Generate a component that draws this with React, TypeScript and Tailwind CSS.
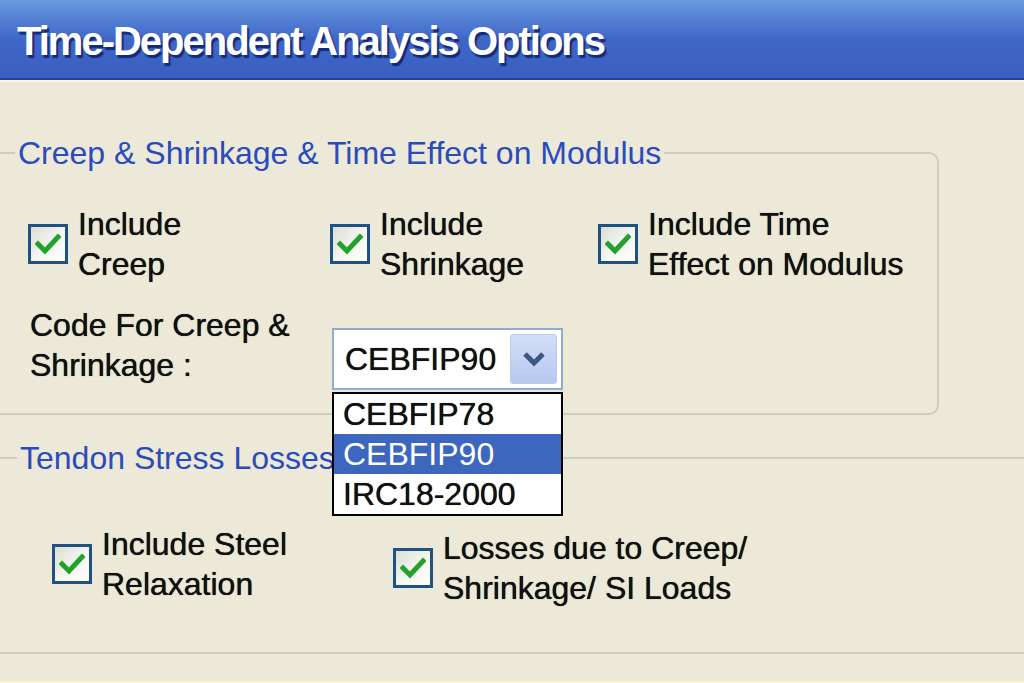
import React from "react";

function Check() {
  return (
    <div className="w-[40px] h-[40px] shrink-0 border-[3px] border-[#1d5283] bg-gradient-to-br from-[#dcdcd4] via-[#f4f4f0] to-white flex items-center justify-center">
      <svg width="26" height="22" viewBox="0 0 26 22">
        <path d="M3 11 L10 18 L23 4" fill="none" stroke="#21a22b" strokeWidth="5" strokeLinecap="square" />
      </svg>
    </div>
  );
}

function CheckItem({ lines }: { lines: string[] }) {
  return (
    <div className="flex items-center gap-[10px]">
      <Check />
      <div className="text-[32px] leading-[40px] text-[#111] [text-shadow:0_0_0.7px_#000]">
        {lines.map((l) => (
          <div key={l} className="whitespace-nowrap">{l}</div>
        ))}
      </div>
    </div>
  );
}

export default function App() {
  return (
    <div
      className="w-[1024px] h-[683px] overflow-hidden bg-[#ece9d8] flex flex-col"
      style={{ fontFamily: '"Liberation Sans", Arial, sans-serif' }}
    >
      {/* Title bar */}
      <div className="h-[78px] shrink-0 bg-gradient-to-b from-[#6a9ae0] via-[#3f66c6] to-[#3a5fc0] flex items-center pl-[17px] pt-[4px]">
        <span className="text-white font-bold text-[40px] tracking-[-2px] [text-shadow:2px_3px_1px_#142a78]">
          Time-Dependent Analysis Options
        </span>
      </div>
      <div className="h-[2px] shrink-0 bg-[#20409c]" />
      <div className="h-[2px] shrink-0 bg-[#fbf8e4]" />

      {/* Group 1 */}
      <fieldset className="mt-[53px] ml-[-20px] w-[959px] border-2 border-[#cfccbb] rounded-[10px] pb-[23px] px-0 min-w-0">
        <legend className="ml-[33px] px-[3px] text-[32px] leading-[36px] text-[#2b4bbd] whitespace-nowrap">
          Creep &amp; Shrinkage &amp; Time Effect on Modulus
        </legend>
        <div className="mt-[33px] flex">
          <div className="ml-[46px] w-[302px]">
            <CheckItem lines={["Include", "Creep"]} />
          </div>
          <div className="w-[268px]">
            <CheckItem lines={["Include", "Shrinkage"]} />
          </div>
          <div>
            <CheckItem lines={["Include Time", "Effect on Modulus"]} />
          </div>
        </div>
        <div className="mt-[21px] flex items-start">
          <div className="ml-[48px] w-[302px] text-[32px] leading-[40px] text-[#111] [text-shadow:0_0_0.7px_#000]">
            <div>Code For Creep &amp;</div>
            <div>Shrinkage :</div>
          </div>
          <div className="relative mt-[23px]">
            <div className="w-[231px] h-[62px] border-2 border-[#8fabd0] bg-white flex items-center justify-between pl-[11px] pr-[4px]">
              <span className="text-[32px] text-[#111] [text-shadow:0_0_0.7px_#000]">CEBFIP90</span>
              <div className="w-[47px] h-[50px] rounded-[3px] border border-[#b9cbef] bg-gradient-to-b from-[#d3def8] to-[#b7c9f0] flex items-center justify-center">
                <svg width="24" height="16" viewBox="0 0 24 16">
                  <path d="M3 3 L12 12 L21 3" fill="none" stroke="#3e5684" strokeWidth="5" />
                </svg>
              </div>
            </div>
            {/* Dropdown list */}
            <div className="absolute left-0 top-[64px] z-10 w-[231px] border-2 border-black bg-white text-[32px] [text-shadow:0_0_0.7px_#000]">
              <div className="h-[40px] leading-[40px] pl-[9px] text-[#111]">CEBFIP78</div>
              <div className="h-[40px] leading-[40px] pl-[9px] bg-[#3d67bf] text-white [text-shadow:none]">CEBFIP90</div>
              <div className="h-[40px] leading-[40px] pl-[9px] text-[#111]">IRC18-2000</div>
            </div>
          </div>
        </div>
      </fieldset>

      {/* Group 2 */}
      <fieldset className="mt-[25px] ml-[-20px] w-[1070px] border-2 border-[#cfccbb] rounded-[10px] pb-[44px] px-0 min-w-0">
        <legend className="ml-[35px] px-[3px] text-[32px] leading-[36px] text-[#2b4bbd] whitespace-nowrap">
          Tendon Stress Losses
        </legend>
        <div className="mt-[48px] flex">
          <div className="ml-[70px] w-[341px]">
            <CheckItem lines={["Include Steel", "Relaxation"]} />
          </div>
          <div className="mt-[4px]">
            <CheckItem lines={["Losses due to Creep/", "Shrinkage/ SI Loads"]} />
          </div>
        </div>
      </fieldset>
      <div className="flex-1" />
      <div className="h-[2px] shrink-0 bg-[#fbf6d8]" />
    </div>
  );
}
